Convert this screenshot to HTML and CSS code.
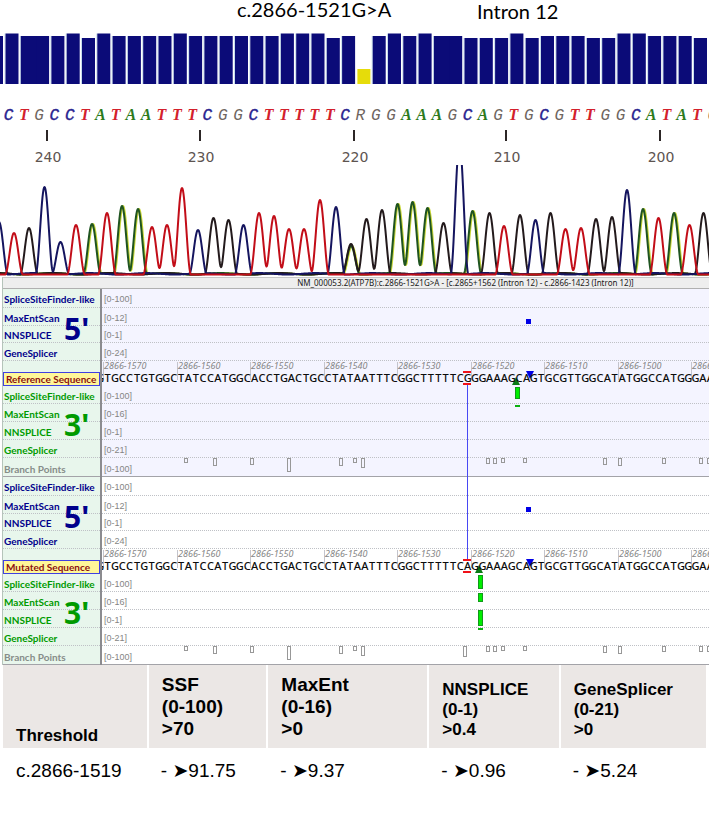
FILE: index.html
```html
<!DOCTYPE html>
<html lang="en">
<head>
<meta charset="utf-8">
<title>ATP7B c.2866-1521G&gt;A splicing analysis</title>
<link rel="stylesheet" href="styles.css">
</head>
<body>
<main>
  <section class="trace">
    <header class="trace-head">
      <h1 class="variant">c.2866-1521G&gt;A</h1>
      <h2 class="region">Intron 12</h2>
    </header>
    <svg id="chromatogram" class="chromatogram" viewBox="0 28 709 249" role="img" aria-label="Sequencing chromatogram"></svg>
  </section>

  <section class="browser">
    <h2 class="browser-title">NM_000053.2(ATP7B):c.2866-1521G&gt;A - [c.2865+1562 (Intron 12) - c.2866-1423 (Intron 12)]</h2>

    <div class="panel panel-reference">
      <div class="labels">
        <div class="r19 donor">SpliceSiteFinder-like</div>
        <div class="r18 donor">MaxEntScan</div>
        <div class="r17 donor">NNSPLICE</div>
        <div class="r18 donor">GeneSplicer</div>
        <div class="r26 seq-label"><span>Reference Sequence</span></div>
        <div class="r17 acceptor">SpliceSiteFinder-like</div>
        <div class="r18 acceptor">MaxEntScan</div>
        <div class="r18 acceptor">NNSPLICE</div>
        <div class="r18 acceptor">GeneSplicer</div>
        <div class="r19 branch">Branch Points</div>
        <b class="end five">5'</b>
        <b class="end three">3'</b>
      </div>
      <div class="plot">
        <div class="r19">[0-100]</div>
        <div class="r18">[0-12]</div>
        <div class="r17">[0-1]</div>
        <div class="r18">[0-24]</div>
        <div class="r26 ruler"></div>
        <div class="r17">[0-100]</div>
        <div class="r18">[0-16]</div>
        <div class="r18">[0-1]</div>
        <div class="r18">[0-21]</div>
        <div class="r19">[0-100]</div>
        <svg id="reference" class="marks" role="img" aria-label="Reference sequence tracks"></svg>
      </div>
    </div>

    <div class="panel panel-mutated">
      <div class="labels">
        <div class="r19 donor">SpliceSiteFinder-like</div>
        <div class="r18 donor">MaxEntScan</div>
        <div class="r17 donor">NNSPLICE</div>
        <div class="r18 donor">GeneSplicer</div>
        <div class="r26 seq-label"><span>Mutated Sequence</span></div>
        <div class="r17 acceptor">SpliceSiteFinder-like</div>
        <div class="r18 acceptor">MaxEntScan</div>
        <div class="r18 acceptor">NNSPLICE</div>
        <div class="r18 acceptor">GeneSplicer</div>
        <div class="r19 branch">Branch Points</div>
        <b class="end five">5'</b>
        <b class="end three">3'</b>
      </div>
      <div class="plot">
        <div class="r19">[0-100]</div>
        <div class="r18">[0-12]</div>
        <div class="r17">[0-1]</div>
        <div class="r18">[0-24]</div>
        <div class="r26 ruler"></div>
        <div class="r17">[0-100]</div>
        <div class="r18">[0-16]</div>
        <div class="r18">[0-1]</div>
        <div class="r18">[0-21]</div>
        <div class="r19">[0-100]</div>
        <svg id="mutated" class="marks" role="img" aria-label="Mutated sequence tracks"></svg>
      </div>
    </div>
  </section>

  <table class="scores">
    <colgroup><col class="c1"><col class="c2"><col class="c3"><col class="c4"><col class="c5"></colgroup>
    <thead>
      <tr>
        <th scope="col" class="first">Threshold</th>
        <th scope="col" class="large">SSF<br>(0-100)<br>&gt;70</th>
        <th scope="col" class="large">MaxEnt<br>(0-16)<br>&gt;0</th>
        <th scope="col">NNSPLICE<br>(0-1)<br>&gt;0.4</th>
        <th scope="col">GeneSplicer<br>(0-21)<br>&gt;0</th>
      </tr>
    </thead>
    <tbody>
      <tr>
        <td>c.2866-1519</td>
        <td>- <span class="arrow">➤</span>91.75</td>
        <td>- <span class="arrow">➤</span>9.37</td>
        <td>- <span class="arrow">➤</span>0.96</td>
        <td>- <span class="arrow">➤</span>5.24</td>
      </tr>
    </tbody>
  </table>
</main>
<script src="charts.js"></script>
</body>
</html>
```
FILE: styles.css
```css
* { box-sizing: border-box; }

body {
  margin: 0;
  background: #fff;
  color: #000;
  font-family: "Liberation Sans", Arial, sans-serif;
}

h1, h2 { margin: 0; font-weight: 400; }

/* Chromatogram */
.trace-head {
  display: grid;
  grid-template-columns: 237fr 240fr 232fr;
  height: 28px;
  font-family: Lato, sans-serif;
}
.variant, .region { font-size: 20px; line-height: 18px; white-space: nowrap; }
.variant { grid-column: 2; }
.region { grid-column: 3; padding-top: 2px; }

.chromatogram { display: block; width: 100%; }
.bar { fill: #0b0b78; }
.bar-low { fill: #e6dc0a; }
.bar-edge { fill: #c5dcec; }
.base { font: italic 400 16px "Liberation Mono", monospace; text-anchor: middle; }
.base-A { fill: #2c7a1c; font: italic 700 16px "Liberation Serif", serif; }
.base-C { fill: #2a2490; stroke: #2a2490; stroke-width: 0.4; }
.base-T { fill: #d3202c; font: italic 700 16px "Liberation Serif", serif; }
.base-G, .base-R { fill: #6f665f; }
.tick { fill: #2c2626; }
.tick-label { font: 14px "DejaVu Sans", sans-serif; fill: #5d5450; text-anchor: middle; }
.line { fill: none; stroke-width: 2; stroke-linejoin: round; }
.line-halo { stroke: #c8d636; }
.line-G { stroke: #231a1c; }
.line-A { stroke: #1f5420; }
.line-C { stroke: #15155f; }
.line-T { stroke: #c20d18; }

/* Splicing browser */
.browser {
  margin-left: 2px;
  border-top: 1px solid #c8c8c8;
  border-left: 1px solid #b5c4ba;
}
.browser-title {
  height: 11px;
  padding-left: 31%;
  background: #eee;
  border-bottom: 1px solid #b0b0b0;
  color: #1a1a1a;
  font: 8px/10px "Noto Sans", sans-serif;
  text-align: center;
  white-space: nowrap;
}
.panel { display: flex; }
.labels {
  position: relative;
  flex: 0 0 99px;
  width: 99px;
  min-width: 0;
  background: #e8f6ec;
  border-right: 2px solid #8b8b8f;
  font: 700 10px Lato, sans-serif;
  white-space: nowrap;
}
.plot {
  position: relative;
  flex: 1;
  min-width: 0;
  overflow: hidden;
  color: #858585;
  font: 9px "Liberation Sans", sans-serif;
}
.panel-reference .plot { background: #f4f4ff; }
.labels > div, .plot > div {
  display: flex;
  align-items: center;
  padding-left: 2px;
  padding-top: 2px;
  border-bottom: 1px dotted #bfc1c6;
}
.labels > div { padding-left: 1px; }
.labels > div:nth-child(10), .plot > div:nth-child(10) { border-bottom: 1px solid #a3a3a8; padding-top: 3px; }
.r17 { height: 17px; }
.r18 { height: 18px; }
.r19 { height: 19px; }
.r26 { height: 26px; }
.donor { color: #00008b; }
.acceptor { color: #009a00; }
.branch { color: #868d89; }
.labels > .seq-label { padding: 9px 0 0; border: 0; }
.plot > .ruler { border: 0; }
.seq-label span {
  flex: 1;
  height: 14px;
  padding-left: 2px;
  background: #fff799;
  border: 1px solid #4040e0;
  color: #8b1010;
  line-height: 13px;
}
.end { position: absolute; left: 61px; font: 700 30px/30px "Noto Sans", sans-serif; }
.five { top: 25px; color: #00008b; }
.three { top: 121px; color: #009a00; }

.marks { position: absolute; left: 0; top: 0; width: 100%; height: 100%; }
.ruler-tick { fill: #c4c4cc; }
.ruler-label { font: italic 9px "Noto Sans", sans-serif; fill: #868686; }
.sequence { font: 500 11px "Noto Sans", sans-serif; fill: #0c0c0c; text-anchor: middle; }
.link { fill: #4848f4; }
.variant-mark { fill: #f01018; }
.site-donor { fill: #0000e6; }
.site-acceptor { fill: #0a7a14; }
.score { fill: #00ee00; stroke: #11991a; }
.score-low { fill: #0bb010; }
.branch-box { fill: none; stroke: #989898; }

/* Score table */
.scores {
  width: calc(100% - 6px);
  margin: 0 3px;
  border-collapse: collapse;
  table-layout: fixed;
  text-align: left;
}
.c1 { width: 20.6%; }
.c2 { width: 17%; }
.c3 { width: 22.9%; }
.c4 { width: 18.7%; }
.c5 { width: 20.8%; }
.scores th {
  height: 83px;
  padding: 0 0 8px 13px;
  background: #ebe7e5;
  border-left: 2px solid #fff;
  font-size: 17px;
  line-height: 20px;
  vertical-align: bottom;
}
.scores th.first { padding-bottom: 2px; border-left: 0; }
.scores th.large { font-size: 19px; line-height: 22px; }
.scores td { padding: 10px 0 0 13px; font-size: 19px; line-height: 24px; white-space: nowrap; }
.arrow { font-family: "DejaVu Sans", sans-serif; }
```
FILE: charts.js
```js
const NS = "http://www.w3.org/2000/svg";

function add(parent, tag, attrs, text) {
  const el = document.createElementNS(NS, tag);
  for (const key in attrs) el.setAttribute(key, attrs[key]);
  if (text) el.textContent = text;
  parent.appendChild(el);
  return el;
}

/* Chromatogram: quality bars, base calls, position ticks, four traces */
const PITCH = 15.3;
const BAR_BOTTOM = 84;
const QUALITY = "HMMMHLHMMMMHMMMMMMHHHLMYMHMHMMLLLHLMMMLLHHMMML";
const BAR_TOP = { H: 33.5, M: 36, L: 38, Y: 69 };
const JOINED = [1, 28];
const BASES = "CTGCCTATAATTTCGGCTTTTTCRGGAAAGCAGTGCGTTGGCATATG";
const TICKS = [[47, 240], [200, 230], [354, 220], [506, 210], [660, 200]];
const PEAKS = [
  [-1, 222, "C"], [14, 233, "T"], [29, 228, "G"], [44.5, 187, "C"], [60.5, 242, "C"],
  [76, 225, "T"], [92, 224, "A"], [107, 213, "T"], [122, 206, "A"], [138, 209, "A"],
  [152, 227, "T"], [167, 225, "T"], [182, 188, "T"], [198, 230, "C"], [213.5, 218, "G"],
  [228.5, 220, "G"], [243.5, 225, "C"], [259, 213, "T"], [274, 216, "T"], [289, 229, "T"],
  [304, 229, "T"], [320, 200, "T"], [336, 207, "C"], [351, 246, "A"], [351, 244, "G"],
  [366.5, 219, "G"], [382, 210, "G"], [397.5, 204, "A"], [412.5, 202, "A"], [427.5, 208, "A"],
  [443.5, 223, "G"], [459.5, 144, "C"], [472.5, 211, "A"], [489.5, 213, "G"], [504, 226, "T"],
  [520, 215, "G"], [535.5, 220, "C"], [550.5, 213, "G"], [565.5, 229, "T"], [581, 228, "T"],
  [596, 219, "G"], [612, 217, "G"], [627, 190, "C"], [643, 209, "A"], [658.5, 218, "T"],
  [674, 213, "A"], [689.5, 225, "T"], [703.5, 213, "G"]
];
const BASELINE = 274.5;
const HALF_WIDTH = 9;

function traceFor(base) {
  const points = [];
  for (let x = -2; x <= 711; x += 0.5) {
    let height = 0;
    for (const [centre, top, b] of PEAKS) {
      const d = Math.abs(x - centre);
      if (b === base && d < HALF_WIDTH) {
        height += (BASELINE - top) * (1 + Math.cos(Math.PI * d / HALF_WIDTH)) / 2;
      }
    }
    if (height < 1) height = base === "T" ? 0 : 0.7 + 0.7 * Math.sin(x / 9 + base.charCodeAt(0));
    points.push(x + "," + (BASELINE - height).toFixed(1));
  }
  return points.join(" ");
}

function drawChromatogram(svg) {
  add(svg, "rect", { x: 0, y: BAR_TOP.M, width: 3, height: BAR_BOTTOM - BAR_TOP.M, class: "bar" });
  [...QUALITY].forEach((q, i) => {
    const x = 5.5 + PITCH * i;
    const top = BAR_TOP[q];
    const height = BAR_BOTTOM - top;
    const width = JOINED.includes(i) ? PITCH + 1 : 13;
    if (q !== "Y" && !JOINED.includes(i - 1)) {
      add(svg, "rect", { x: x - 1, y: top, width: 1, height, class: "bar-edge" });
    }
    add(svg, "rect", { x, y: top, width, height, class: q === "Y" ? "bar-low" : "bar" });
  });
  [...BASES].forEach((b, i) => {
    add(svg, "text", { x: 8.5 + PITCH * i, y: 120, class: "base base-" + b }, b);
  });
  for (const [x, label] of TICKS) {
    add(svg, "rect", { x: x - 1, y: 130, width: 2, height: 11, class: "tick" });
    add(svg, "text", { x: x + 1, y: 162, class: "tick-label" }, String(label));
  }
  const clip = add(svg, "clipPath", { id: "trace-area" });
  add(clip, "rect", { x: 0, y: 165, width: 709, height: 112 });
  const traces = add(svg, "g", { "clip-path": "url(#trace-area)" });
  add(traces, "polyline", { points: traceFor("A"), class: "line line-halo", transform: "translate(1 0)" });
  for (const base of ["A", "G", "C", "T"]) {
    add(traces, "polyline", { points: traceFor(base), class: "line line-" + base });
  }
}

/* Splicing tracks; x and y are measured from the plot's top left corner */
const STEP = 7.35;
const FIRST_BASE = -1.8;
const HEAD = "GTGCCTGTGGCTATCCATGGCACCTGACTGCCTATAATTTCGGCTTTTTC";
const TAIL = "GGAAAGCAGTGCGTTGGCATATGGCCATGGGAA";
const VARIANT_X = 365;
const BRANCHES = [
  [82, 5], [111, 8], [148, 7], [185, 14], [237, 8], [251, 5], [259, 10], [384, 6],
  [391, 6], [399, 5], [421, 5], [501, 7], [516, 8], [560, 6], [597, 6], [605, 6]
];

function drawTracks(svg, track) {
  for (let i = 0; i < 9; i++) {
    const x = Math.round(1 + i * 10 * STEP);
    add(svg, "rect", { x, y: 73, width: 1, height: 18, class: "ruler-tick" });
    add(svg, "text", { x: x + 1, y: 80, class: "ruler-label" }, "2866-" + (1570 - i * 10));
  }
  add(svg, "rect", { x: VARIANT_X, y: track.link[0], width: 1, height: track.link[1], class: "link" });
  add(svg, "path", { d: `M${track.acceptor - 2} 96h8l-4-8z`, class: "site-acceptor" });
  add(svg, "path", { d: "M424 82h8l-4 8z", class: "site-donor" });
  const bases = HEAD + track.allele + TAIL;
  const xs = [...bases].map((b, i) => (FIRST_BASE + i * STEP).toFixed(1)).join(" ");
  add(svg, "text", { x: xs, y: 93, class: "sequence" }, bases);
  add(svg, "rect", { x: VARIANT_X - 4, y: 82, width: 8, height: 2, class: "variant-mark" });
  add(svg, "rect", { x: VARIANT_X - 4, y: 94, width: 8, height: 2, class: "variant-mark" });
  add(svg, "rect", { x: 424, y: 30, width: 5, height: 5, class: "site-donor" });
  for (const [y, h] of track.scores) {
    add(svg, "rect", { x: track.acceptor + 1.5, y: y + 0.5, width: 4, height: h - 1, class: "score" });
  }
  add(svg, "rect", { x: track.acceptor + 1, y: track.low, width: 5, height: 2, class: "score-low" });
  for (const [x, h] of BRANCHES.concat(track.branches)) {
    add(svg, "rect", { x: x + 0.5, y: 169.5, width: 3, height: h - 1, class: "branch-box" });
  }
}

drawChromatogram(document.getElementById("chromatogram"));
drawTracks(document.getElementById("reference"), {
  allele: "G", acceptor: 412, link: [96, 92], scores: [[98, 12]], low: 116, branches: []
});
drawTracks(document.getElementById("mutated"), {
  allele: "A", acceptor: 375, link: [0, 82], scores: [[98, 14], [116, 9], [133, 16]], low: 151,
  branches: [[361, 11]]
});
```
